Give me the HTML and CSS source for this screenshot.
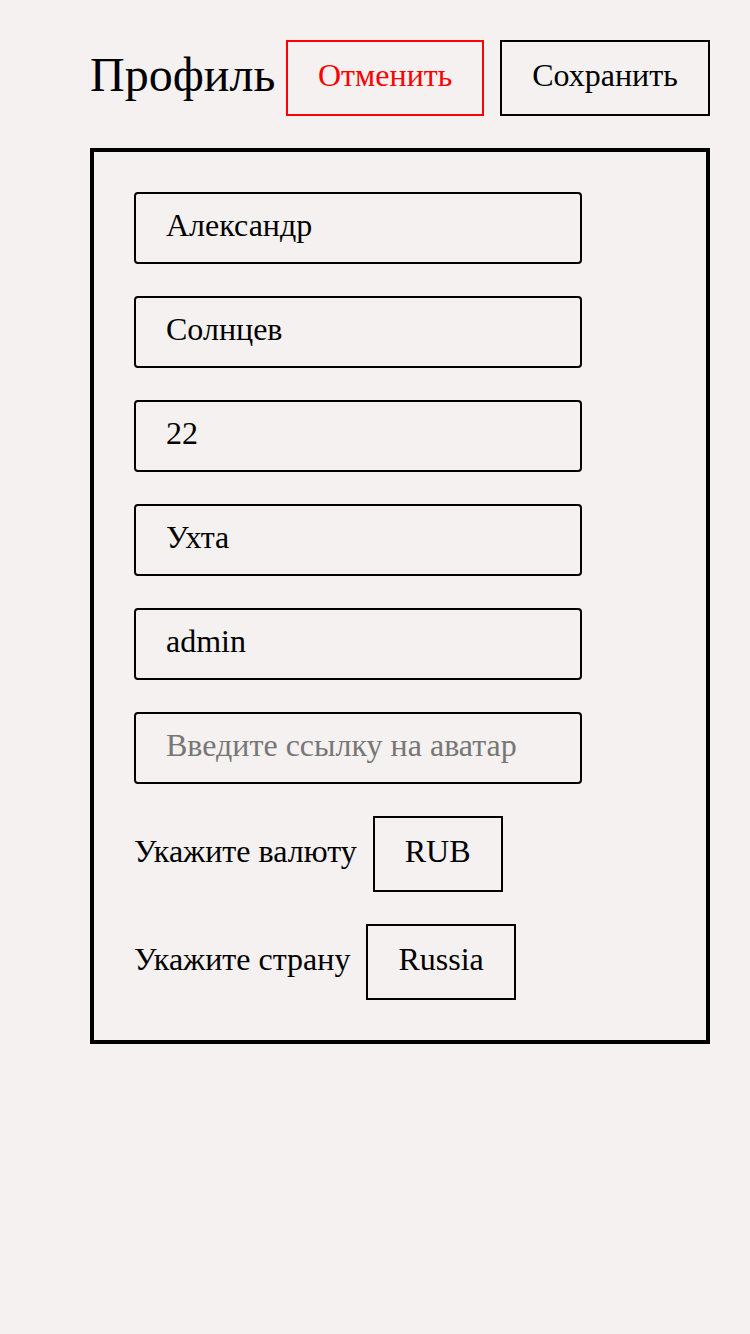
FILE: index.html
```html
<!DOCTYPE html>
<html lang="ru">
<head>
<meta charset="utf-8">
<title>Профиль</title>
<link rel="stylesheet" href="styles.css">
</head>
<body>
<main class="page">
  <header class="header">
    <h1 class="title">Профиль</h1>
    <div class="actions">
      <button class="btn btn-cancel" type="button">Отменить</button>
      <button class="btn btn-save" type="button">Сохранить</button>
    </div>
  </header>
  <form class="form">
    <input class="field" type="text" value="Александр">
    <input class="field" type="text" value="Солнцев">
    <input class="field" type="text" value="22">
    <input class="field" type="text" value="Ухта">
    <input class="field" type="text" value="admin">
    <input class="field" type="text" placeholder="Введите ссылку на аватар">
    <div class="choice">
      <span class="choice-label">Укажите валюту</span>
      <button class="choice-box" type="button">RUB</button>
    </div>
    <div class="choice">
      <span class="choice-label">Укажите страну</span>
      <button class="choice-box" type="button">Russia</button>
    </div>
  </form>
</main>
</body>
</html>
```
FILE: styles.css
```css
html, body {
  margin: 0;
  padding: 0;
  background: #f4f1f0;
}
body {
  font-family: "Liberation Serif", "Times New Roman", serif;
  color: #000;
}
.page {
  width: 620px;
  margin-left: 90px;
  padding-top: 40px;
  display: flex;
  flex-direction: column;
  gap: 32px;
}
.header {
  display: flex;
  align-items: center;
  justify-content: space-between;
  height: 76px;
}
.title {
  margin: 0;
  padding-bottom: 6px;
  font-size: 48px;
  font-weight: normal;
  line-height: 1;
}
.actions {
  display: flex;
  gap: 16px;
}
.btn {
  box-sizing: border-box;
  height: 76px;
  padding: 0 30px 6px;
  background: transparent;
  font-family: inherit;
  font-size: 32px;
  border: 2px solid #000;
  color: #000;
}
.btn-cancel {
  border-color: #ff0000;
  color: #ff0000;
  width: 198px;
}
.btn-save {
  width: 210px;
}
.form {
  box-sizing: border-box;
  border: 4px solid #000;
  padding: 40px;
  display: flex;
  flex-direction: column;
  align-items: flex-start;
  gap: 32px;
}
.field {
  box-sizing: border-box;
  width: 448px;
  height: 72px;
  padding: 0 30px 6px;
  border: 2px solid #000;
  border-radius: 4px;
  background: transparent;
  font-family: inherit;
  font-size: 32px;
  color: #000;
  outline: none;
}
.field::placeholder {
  color: #777;
}
.choice {
  display: flex;
  align-items: center;
  gap: 16px;
}
.choice-label {
  font-size: 32px;
  padding-bottom: 6px;
}
.choice-box {
  box-sizing: border-box;
  height: 76px;
  padding: 0 30px 6px;
  border: 2px solid #000;
  background: transparent;
  font-family: inherit;
  font-size: 32px;
  color: #000;
}
```
